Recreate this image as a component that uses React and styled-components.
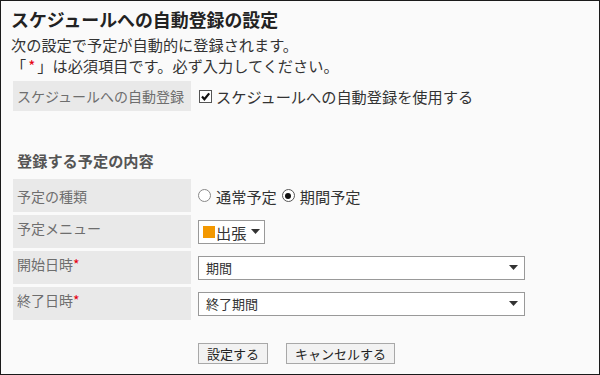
import React from 'react'
import styled, { createGlobalStyle } from 'styled-components'

const GlobalStyle = createGlobalStyle`
  body {
    margin: 0;
    font-family: "Noto Sans CJK JP", "Noto Sans", sans-serif;
    color: #333;
  }
`

const Frame = styled.div`
  background-color: #fafafa;
  border: 1px solid #1a1a1a;
  box-sizing: border-box;
  height: 375px;
  padding: 7px 0 0 10px;
  width: 600px;
`

const Title = styled.h1`
  color: #222;
  font-size: 17.9px;
  font-weight: bold;
  line-height: 22px;
  margin: 0 0 4px;
`

const Note = styled.p`
  font-size: 15.2px;
  line-height: 21px;
  margin: 0;
`

const Required = styled.span`
  color: #e60012;
  padding: 0 ${props => (props.$wide ? '2px' : '0')};
`

const FormTable = styled.div`
  display: grid;
  gap: 3px 7px;
  grid-template-columns: 178px 1fr;
  grid-auto-rows: ${props => props.$rowHeight}px;
  margin: ${props => props.$top}px 0 0 2px;
`

const Label = styled.div`
  align-items: ${props => (props.$top ? 'flex-start' : 'center')};
  background-color: #e9e9e9;
  color: #6e6e6e;
  display: flex;
  font-size: 14px;
  line-height: 20px;
  padding: ${props => (props.$top ? '3px' : '0')} 0 0 4px;
`

const Value = styled.div`
  align-items: center;
  display: flex;
  font-size: 15.2px;
  line-height: 20px;
`

const SectionHeading = styled.h2`
  color: #555;
  font-size: 15.2px;
  font-weight: bold;
  line-height: 21px;
  margin: 39px 0 0 6px;
`

const CheckBox = styled.span`
  align-items: center;
  background-color: #fff;
  border: 1px solid #555;
  box-sizing: border-box;
  display: inline-flex;
  height: 13px;
  justify-content: center;
  margin: 0 4px 0 1px;
  width: 13px;
`

const Radio = styled.span`
  align-items: center;
  background-color: #fff;
  border: 1px solid ${props => (props.$checked ? '#555' : '#888')};
  border-radius: 50%;
  box-sizing: border-box;
  display: inline-flex;
  height: 13px;
  justify-content: center;
  margin-right: 5px;
  width: 13px;

  &::after {
    background-color: #111;
    border-radius: 50%;
    content: '';
    display: ${props => (props.$checked ? 'block' : 'none')};
    height: 6px;
    width: 6px;
  }
`

const RadioText = styled.span`
  margin-right: 5px;
`

const MenuPicker = styled.div`
  align-items: center;
  background-color: #fff;
  border: 1px solid #999;
  box-sizing: border-box;
  display: flex;
  height: 24px;
  padding-left: 4px;
  width: 67px;
`

const Swatch = styled.span`
  background-color: #f39800;
  height: 12px;
  margin-right: 1px;
  width: 12px;
`

const SelectBox = styled.div`
  align-items: center;
  background-color: #fff;
  border: 1px solid #999;
  box-sizing: border-box;
  display: flex;
  font-size: 13px;
  height: 24px;
  justify-content: space-between;
  padding: 0 6px 0 7px;
  width: 327px;
`

const Arrow = styled.svg`
  display: block;
  flex: none;
  margin-left: ${props => props.$gap || 0}px;
`

const ButtonRow = styled.div`
  display: flex;
  gap: 18px;
  margin: 23px 0 0 187px;
`

const Button = styled.button`
  background-color: #f2f2f2;
  border: 1px solid #a8a8a8;
  color: #222;
  font-family: inherit;
  font-size: 13px;
  height: 21px;
  line-height: 19px;
  padding: 0 8px;
`

const DownArrow = ({ gap }) => (
  <Arrow $gap={gap} width="9" height="5" viewBox="0 0 9 5">
    <path d="M0 0H9L4.5 5Z" fill="#333" />
  </Arrow>
)

const App = () => (
  <>
    <GlobalStyle />
    <Frame>
      <Title>スケジュールへの自動登録の設定</Title>
      <Note>次の設定で予定が自動的に登録されます。</Note>
      <Note>
        「<Required $wide>*</Required>」は必須項目です。必ず入力してください。
      </Note>

      <FormTable $rowHeight={30} $top={5}>
        <Label>スケジュールへの自動登録</Label>
        <Value>
          <CheckBox>
            <svg width="11" height="11" viewBox="0 0 11 11">
              <path
                d="M2 5.5L4.4 8.2L9.2 2.4"
                fill="none"
                stroke="#111"
                strokeWidth="2.2"
              />
            </svg>
          </CheckBox>
          スケジュールへの自動登録を使用する
        </Value>
      </FormTable>

      <SectionHeading>登録する予定の内容</SectionHeading>

      <FormTable $rowHeight={33} $top={8}>
        <Label>予定の種類</Label>
        <Value>
          <Radio />
          <RadioText>通常予定</RadioText>
          <Radio $checked />
          <RadioText>期間予定</RadioText>
        </Value>

        <Label $top>予定メニュー</Label>
        <Value>
          <MenuPicker>
            <Swatch />
            出張
            <DownArrow gap={5} />
          </MenuPicker>
        </Value>

        <Label $top>
          開始日時<Required>*</Required>
        </Label>
        <Value>
          <SelectBox>
            期間
            <DownArrow />
          </SelectBox>
        </Value>

        <Label $top>
          終了日時<Required>*</Required>
        </Label>
        <Value>
          <SelectBox>
            終了期間
            <DownArrow />
          </SelectBox>
        </Value>
      </FormTable>

      <ButtonRow>
        <Button>設定する</Button>
        <Button>キャンセルする</Button>
      </ButtonRow>
    </Frame>
  </>
)

export default App
